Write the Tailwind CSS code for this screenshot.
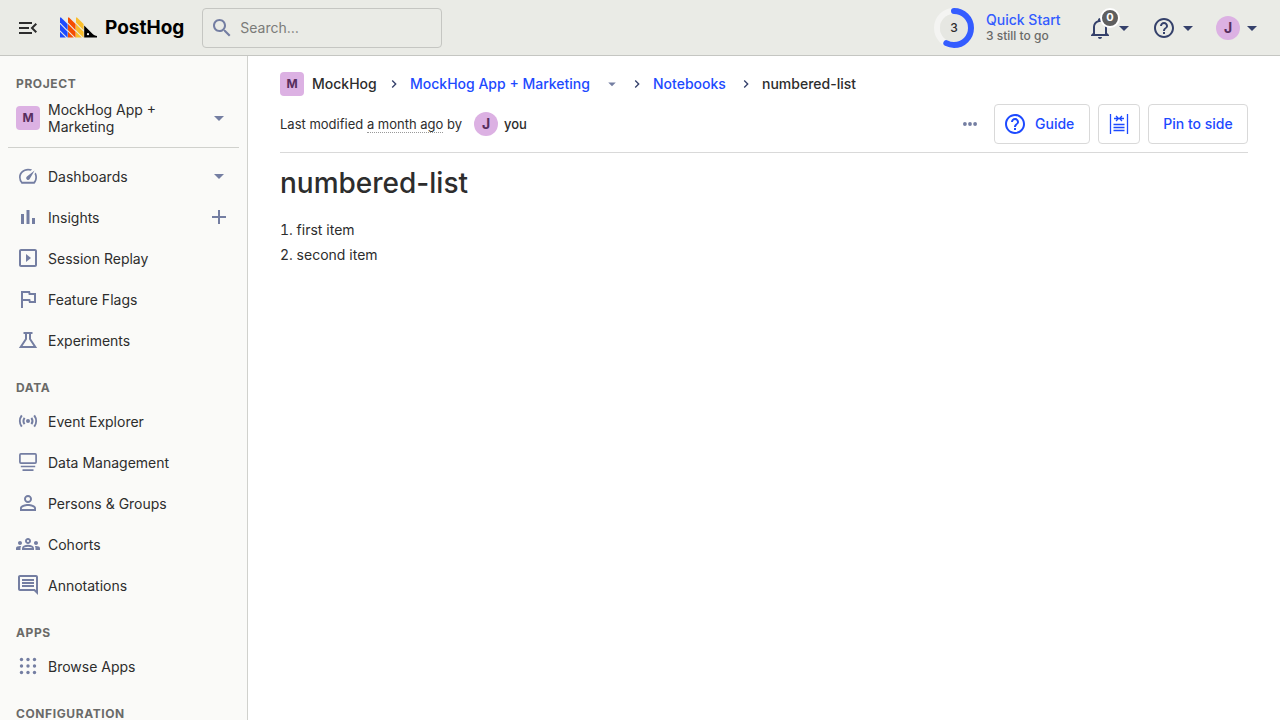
<!DOCTYPE html>
<html lang="en">
<head>
<meta charset="utf-8">
<meta name="viewport" content="width=device-width, initial-scale=1">
<title>numbered-list • PostHog</title>
<script src="https://cdn.jsdelivr.net/npm/@tailwindcss/browser@4"></script>
</head>
<body class="flex h-screen flex-col overflow-hidden bg-white font-['Inter',sans-serif] text-sm text-[#2d2d2d]">
<svg class="hidden" aria-hidden="true">
  <symbol id="caret" viewBox="0 0 24 24"><path d="M7 10l5 5 5-5z"/></symbol>
  <symbol id="chevron" viewBox="0 0 24 24"><path d="M8.59 16.59 13.17 12 8.59 7.41 10 6l6 6-6 6z"/></symbol>
  <symbol id="help" viewBox="0 0 24 24"><path d="M11 18h2v-2h-2v2zm1-16C6.48 2 2 6.48 2 12s4.48 10 10 10 10-4.48 10-10S17.52 2 12 2zm0 18c-4.41 0-8-3.59-8-8s3.59-8 8-8 8 3.59 8 8-3.59 8-8 8zm0-14c-2.21 0-4 1.79-4 4h2c0-1.1.9-2 2-2s2 .9 2 2c0 2-3 1.75-3 5h2c0-2.25 3-2.5 3-5 0-2.21-1.79-4-4-4z"/></symbol>
</svg>

<header class="flex h-14 shrink-0 items-center border-b border-[#c5c6c2] bg-[#eaebe6] px-4">
  <button class="mr-5 size-6" aria-label="Toggle sidebar">
    <svg class="size-6 fill-[#2d2d2d]" viewBox="0 0 24 24"><path d="M3 18h13v-2H3v2zM3 13h10v-2H3v2zm0-7v2h13V6H3zm18 9.59L17.42 12 21 8.41 19.59 7l-5 5 5 5L21 15.59z"/></svg>
  </button>
  <a href="#" class="mr-[18px] flex items-center gap-2 text-[19px] leading-6 font-bold text-black">
    <svg class="h-[21px] w-[37px]" viewBox="0 0 37 21" aria-hidden="true">
      <g fill="#1d4aff"><path d="M0 .9A.6.6 0 0 1 1 .5L7.600 7.100V13.200L0 5.600z"/><path d="M0 7.100 7.600 14.700V20.500H7.300L0 13.200z"/><path d="M0 14.700 5.800 20.500H.6a.6.6 0 0 1-.6-.6z"/></g>
      <g fill="#f54e00"><path d="M8 .9A.6.6 0 0 1 9 .5L15.600 7.100V13.200L8 5.600z"/><path d="M8 7.100 15.600 14.700V20.500H15.300L8 13.200z"/><path d="M8 14.700 13.800 20.500H8z"/></g>
      <g fill="#f9bd2b"><path d="M16 .9A.6.6 0 0 1 17 .5L23.600 7.100V13.200L16 5.600z"/><path d="M16 7.100 23.600 14.700V20.500H23.300L16 13.200z"/><path d="M16 14.700 21.800 20.500H16z"/></g>
      <path d="M24.200 8.600 33.200 17.600a7 7 0 0 0 4 1.300V20.500H24.200z"/><circle cx="28" cy="17.200" r="1.100" fill="#fff"/>
    </svg>
    PostHog
  </a>
  <label class="flex h-10 w-60 items-center gap-1.5 rounded border border-[#c5c6c2] px-[7px]">
    <svg class="size-6 shrink-0 fill-[#747ea2]" viewBox="0 0 24 24"><path d="M15.5 14h-.79l-.28-.27C15.41 12.59 16 11.11 16 9.5 16 5.91 13.09 3 9.5 3S3 5.91 3 9.5 5.91 16 9.5 16c1.61 0 3.09-.59 4.23-1.57l.27.28v.79l5 4.99L20.49 19l-4.99-5zm-6 0C7.01 14 5 11.99 5 9.5S7.01 5 9.5 5 14 7.01 14 9.5 11.99 14 9.5 14z"/></svg>
    <input type="search" aria-label="Search" placeholder="Search…" class="min-w-0 flex-1 bg-transparent outline-none placeholder:text-[#7b7b79]">
  </label>
  <div class="ml-auto flex items-center">
    <button class="mr-6 flex items-center gap-3 text-left">
      <span class="relative flex size-10 items-center justify-center text-xs font-medium">
        <svg class="absolute inset-0 size-10 -rotate-90" viewBox="0 0 40 40" fill="none" stroke-width="6"><circle cx="20" cy="20" r="17" stroke="#f4f4f2"/><circle cx="20" cy="20" r="14" fill="#e6e7e2"/><circle cx="20" cy="20" r="17" stroke="#345cff" stroke-linecap="round" stroke-dasharray="61 107"/></svg>
        <span class="relative">3</span>
      </span>
      <span class="flex min-w-[78px] flex-col">
        <span class="leading-4 font-medium text-[#345cff]">Quick Start</span>
        <span class="text-xs leading-4 font-medium text-[#6a6a68]">3 still to go</span>
      </span>
    </button>
    <button class="relative mr-4 flex items-center" aria-label="Notifications, 0 unread">
      <svg class="size-6 fill-[#35416b]" viewBox="0 0 24 24"><path d="M10 21H14C14 22.1 13.1 23 12 23S10 22.1 10 21M21 19V20H3V19L5 17V11C5 7.9 7 5.2 10 4.3V4C10 2.9 10.9 2 12 2S14 2.9 14 4V4.3C17 5.2 19 7.9 19 11V17L21 19M17 11C17 8.2 14.8 6 12 6S7 8.2 7 11V18H17V11Z"/></svg>
      <svg class="size-6 fill-[#35416b]"><use href="#caret"/></svg>
      <span class="absolute -top-2 left-3 flex size-5 items-center justify-center rounded-full border-2 border-white bg-[#5f5f5f] text-[11px] font-bold text-white">0</span>
    </button>
    <button class="mr-4 flex items-center" aria-label="Help">
      <svg class="size-6 fill-[#35416b]"><use href="#help"/></svg>
      <svg class="size-6 fill-[#35416b]"><use href="#caret"/></svg>
    </button>
    <button class="flex items-center" aria-label="Account">
      <span class="flex size-6 items-center justify-center rounded-full bg-[#dcb1e3] font-bold text-[#572e5e]">J</span>
      <svg class="size-6 fill-[#35416b]"><use href="#caret"/></svg>
    </button>
  </div>
</header>

<div class="flex min-h-0 flex-1">
  <nav class="flex w-[248px] shrink-0 flex-col gap-px overflow-hidden border-r border-[#d0d1cd] bg-[#fafaf8] px-2 pt-0.5 *:shrink-0" aria-label="Main">
    <h2 class="mt-4 px-2 pb-[3px] text-xs leading-5 font-bold tracking-wider text-[#6a6a68]">PROJECT</h2>
    <button class="flex h-10 items-center gap-2 px-2 text-left">
      <span class="flex size-6 items-center justify-center rounded bg-[#dcb1e3] text-xs font-bold text-[#572e5e]">M</span>
      <span class="w-32 leading-[17px]">MockHog App + Marketing</span>
      <svg class="ml-auto size-6 fill-[#747ea2]"><use href="#caret"/></svg>
    </button>
    <hr class="my-2 border-[#d0d1cd]">
    <div class="flex h-10 items-center px-2">
      <a href="#" class="flex flex-1 items-center gap-2"><svg class="mb-0.5 size-6 fill-[#747ea2]" viewBox="0 0 24 24"><path d="M5.8 20A9 9 0 0 1 3 13.3C3 8.2 7 4.7 12 4.7c1.6 0 2.9.3 4.1.9l-1.4 1.1A8.500 8.500 0 0 0 12 6.400C8 6.400 4.700 9.300 4.700 13.300c0 1.600.5 3.200 1.600 4.500h11.400a7 7 0 0 0 1.600-4.500c0-1.200-.3-2.200-.8-3.200l1.100-1.500c.9 1.400 1.400 3 1.400 4.700 0 2.300-.8 4.500-2.200 6.200l-.5.200H6.300z"/><path d="M18.600 6.500 13.700 15a1.900 1.900 0 1 1-2.800-2.500z"/></svg>Dashboards</a>
      <button aria-label="Pinned dashboards"><svg class="mb-0.5 size-6 fill-[#747ea2]"><use href="#caret"/></svg></button>
    </div>
    <div class="flex h-10 items-center px-2">
      <a href="#" class="flex flex-1 items-center gap-2"><svg class="mb-0.5 size-6 fill-[#747ea2]" viewBox="0 0 24 24"><path d="M5 9h3v10H5zM10.500 5h3v14h-3zM16 13h3v6h-3z"/></svg>Insights</a>
      <button aria-label="New insight"><svg class="mb-0.5 size-6 fill-[#747ea2]" viewBox="0 0 24 24"><path d="M11 5h2v6h6v2h-6v6h-2v-6H5v-2h6z"/></svg></button>
    </div>
    <a href="#" class="flex h-10 items-center gap-2 px-2"><svg class="mb-0.5 size-6 fill-[#747ea2]" viewBox="0 0 24 24"><path d="M10 8v8l5-4-5-4zm9-5H5c-1.100 0-2 .9-2 2v14c0 1.100.9 2 2 2h14c1.100 0 2-.9 2-2V5c0-1.100-.9-2-2-2zm0 16H5V5h14v14z"/></svg>Session Replay</a>
    <a href="#" class="flex h-10 items-center gap-2 px-2"><svg class="mb-0.5 size-6 fill-[#747ea2]" viewBox="0 0 24 24"><path d="M12.360 6l.4 2H18v6h-3.360l-.4-2H7V6h5.360M14 4H5v17h2v-7h5.600l.4 2h7V6h-5.600L14 4z"/></svg>Feature Flags</a>
    <a href="#" class="flex h-10 items-center gap-2 px-2"><svg class="mb-0.5 size-6" viewBox="0 0 24 24" fill="none" stroke="#747ea2" stroke-width="2"><path d="M7.500 5h9M10 5v6L4.700 19h14.600L14 11V5"/></svg>Experiments</a>

    <h2 class="mt-4 px-2 pb-[3px] text-xs leading-5 font-bold tracking-wider text-[#6a6a68]">DATA</h2>
    <a href="#" class="flex h-10 items-center gap-2 px-2"><svg class="mb-0.5 size-6" viewBox="0 0 24 24" fill="none" stroke="#747ea2" stroke-width="2"><circle cx="12" cy="12" r="2" fill="#747ea2" stroke="none"/><path d="M8.600 8.800a5.500 5.500 0 0 0 0 6.400M15.400 8.800a5.500 5.500 0 0 1 0 6.400M5.800 6.300a9.500 9.500 0 0 0 0 11.400M18.200 6.300a9.500 9.500 0 0 1 0 11.400"/></svg>Event Explorer</a>
    <a href="#" class="flex h-10 items-center gap-2 px-2"><svg class="mb-0.5 size-6" viewBox="0 0 24 24" fill="none" stroke="#747ea2" stroke-width="1.700"><rect x="3.900" y="3.900" width="16.200" height="9.200" rx="1"/><path d="M4.800 16.500h14.400M6.500 20.100h11"/></svg>Data Management</a>
    <a href="#" class="flex h-10 items-center gap-2 px-2"><svg class="mb-0.5 size-6 fill-[#747ea2]" viewBox="0 0 24 24"><path d="M12 5.900a2.100 2.100 0 1 1 0 4.200 2.100 2.100 0 0 1 0-4.200m0 9c2.970 0 6.100 1.460 6.100 2.100v1.100H5.900V17c0-.64 3.130-2.100 6.100-2.100M12 4C9.790 4 8 5.790 8 8s1.790 4 4 4 4-1.790 4-4-1.790-4-4-4zm0 9c-2.670 0-8 1.340-8 4v3h16v-3c0-2.660-5.330-4-8-4z"/></svg>Persons &amp; Groups</a>
    <a href="#" class="flex h-10 items-center gap-2 px-2"><svg class="mb-0.5 size-6 fill-[#747ea2]" viewBox="0 0 24 24"><path d="M4 13c1.100 0 2-.9 2-2s-.9-2-2-2-2 .9-2 2 .9 2 2 2zm1.130 1.100C4.760 14.040 4.390 14 4 14c-.99 0-1.930.21-2.780.58C.48 14.900 0 15.620 0 16.430V18h4.500v-1.610c0-.83.230-1.610.630-2.290zM20 13c1.100 0 2-.9 2-2s-.9-2-2-2-2 .9-2 2 .9 2 2 2zm4 3.430c0-.81-.48-1.530-1.220-1.850A6.950 6.950 0 0 0 20 14c-.39 0-.76.040-1.130.1.400.68.630 1.460.63 2.290V18H24v-1.570zM16.240 13.650C15.070 13.130 13.630 12.750 12 12.750s-3.070.39-4.240.9A2.990 2.990 0 0 0 6 16.390V18h12v-1.610c0-1.180-.68-2.260-1.760-2.740zM8.070 16c.09-.23.130-.39.910-.69.970-.38 1.990-.56 3.020-.56s2.050.18 3.020.56c.77.300.81.460.91.690H8.070zM12 8c.55 0 1 .45 1 1s-.45 1-1 1-1-.45-1-1 .45-1 1-1m0-2c-1.660 0-3 1.340-3 3s1.340 3 3 3 3-1.340 3-3-1.340-3-3-3z"/></svg>Cohorts</a>
    <a href="#" class="flex h-10 items-center gap-2 px-2"><svg class="mb-0.5 size-6 fill-[#747ea2]" viewBox="0 0 24 24"><path d="M21.990 4c0-1.100-.89-2-1.990-2H4c-1.100 0-2 .9-2 2v12c0 1.100.9 2 2 2h14l4 4-.010-18zM20 4v13.170L18.830 16H4V4h16zM6 12h12v2H6zm0-3h12v2H6zm0-3h12v2H6z"/></svg>Annotations</a>

    <h2 class="mt-4 px-2 pb-[3px] text-xs leading-5 font-bold tracking-wider text-[#6a6a68]">APPS</h2>
    <a href="#" class="flex h-10 items-center gap-2 px-2"><svg class="mb-0.5 size-6 fill-[#747ea2]" viewBox="0 0 24 24"><circle cx="5.500" cy="5.500" r="1.700"/><circle cx="12" cy="5.500" r="1.700"/><circle cx="18.500" cy="5.500" r="1.700"/><circle cx="5.500" cy="12" r="1.700"/><circle cx="12" cy="12" r="1.700"/><circle cx="18.500" cy="12" r="1.700"/><circle cx="5.500" cy="18.500" r="1.700"/><circle cx="12" cy="18.500" r="1.700"/><circle cx="18.500" cy="18.500" r="1.700"/></svg>Browse Apps</a>
    <h2 class="mt-4 px-2 pb-[3px] text-xs leading-5 font-bold tracking-wider text-[#6a6a68]">CONFIGURATION</h2>
  </nav>

  <main class="min-w-0 flex-1 px-8 pt-4">
    <nav class="flex h-6 items-center gap-2 font-medium" aria-label="Breadcrumb">
      <span class="flex size-6 items-center justify-center rounded bg-[#dcb1e3] text-xs font-bold text-[#572e5e]">M</span>
      <span class="min-w-[66px]">MockHog</span>
      <svg class="size-4 fill-[#35416b]"><use href="#chevron"/></svg>
      <a href="#" class="min-w-[185px] text-[#1d4aff]">MockHog App + Marketing</a>
      <button aria-label="Switch project"><svg class="size-[18px] fill-[#747ea2]"><use href="#caret"/></svg></button>
      <svg class="size-4 fill-[#35416b]"><use href="#chevron"/></svg>
      <a href="#" class="min-w-[77px] text-[#1d4aff]">Notebooks</a>
      <svg class="size-4 fill-[#35416b]"><use href="#chevron"/></svg>
      <span>numbered-list</span>
    </nav>
    <div class="mt-2 flex items-center justify-between border-b border-[#d9d9d9] pb-2">
      <div class="flex items-center text-[13px] leading-4">
        <span class="min-w-[188px]">Last modified <span class="border-b border-dotted border-[#999999]">a month ago</span> by</span>
        <span class="mx-1.5 flex size-6 items-center justify-center rounded-full bg-[#dcb1e3] text-sm font-bold text-[#572e5e]">J</span>
        <span class="font-medium">you</span>
      </div>
      <div class="flex items-center gap-2 font-medium text-[#1d4aff]">
        <button class="flex size-8 items-center justify-center" aria-label="More"><svg class="size-4 fill-[#747ea2]" viewBox="0 0 16 16"><circle cx="2.900" cy="8" r="1.900"/><circle cx="8" cy="8" r="1.900"/><circle cx="13.100" cy="8" r="1.900"/></svg></button>
        <button class="flex h-10 min-w-24 items-center gap-2 rounded border border-[#d9d9d9] pr-3 pl-2"><svg class="size-6 fill-[#1d4aff]"><use href="#help"/></svg>Guide</button>
        <button class="flex h-10 items-center rounded border border-[#d9d9d9] px-2" aria-label="Fixed content width"><svg class="size-6" viewBox="0 0 24 24" fill="none" stroke="#1d4aff" stroke-width="1.300"><path d="M3.500 2v20M20.500 2v20M6.500 12.500h11M6.500 15.500h11M6.500 18.500h11M7 6.500h4M17 6.500h-4M9 4l2.500 2.500L9 9M15 4l-2.500 2.500L15 9"/></svg></button>
        <button class="flex h-10 min-w-[100px] items-center justify-center rounded border border-[#d9d9d9] px-3">Pin to side</button>
      </div>
    </div>
    <article class="pt-3">
      <h1 class="text-[28px] leading-9 font-medium">numbered-list</h1>
      <ol class="mt-4 list-inside list-decimal leading-[25px]">
        <li>first item</li>
        <li>second item</li>
      </ol>
    </article>
  </main>
</div>
</body>
</html>
